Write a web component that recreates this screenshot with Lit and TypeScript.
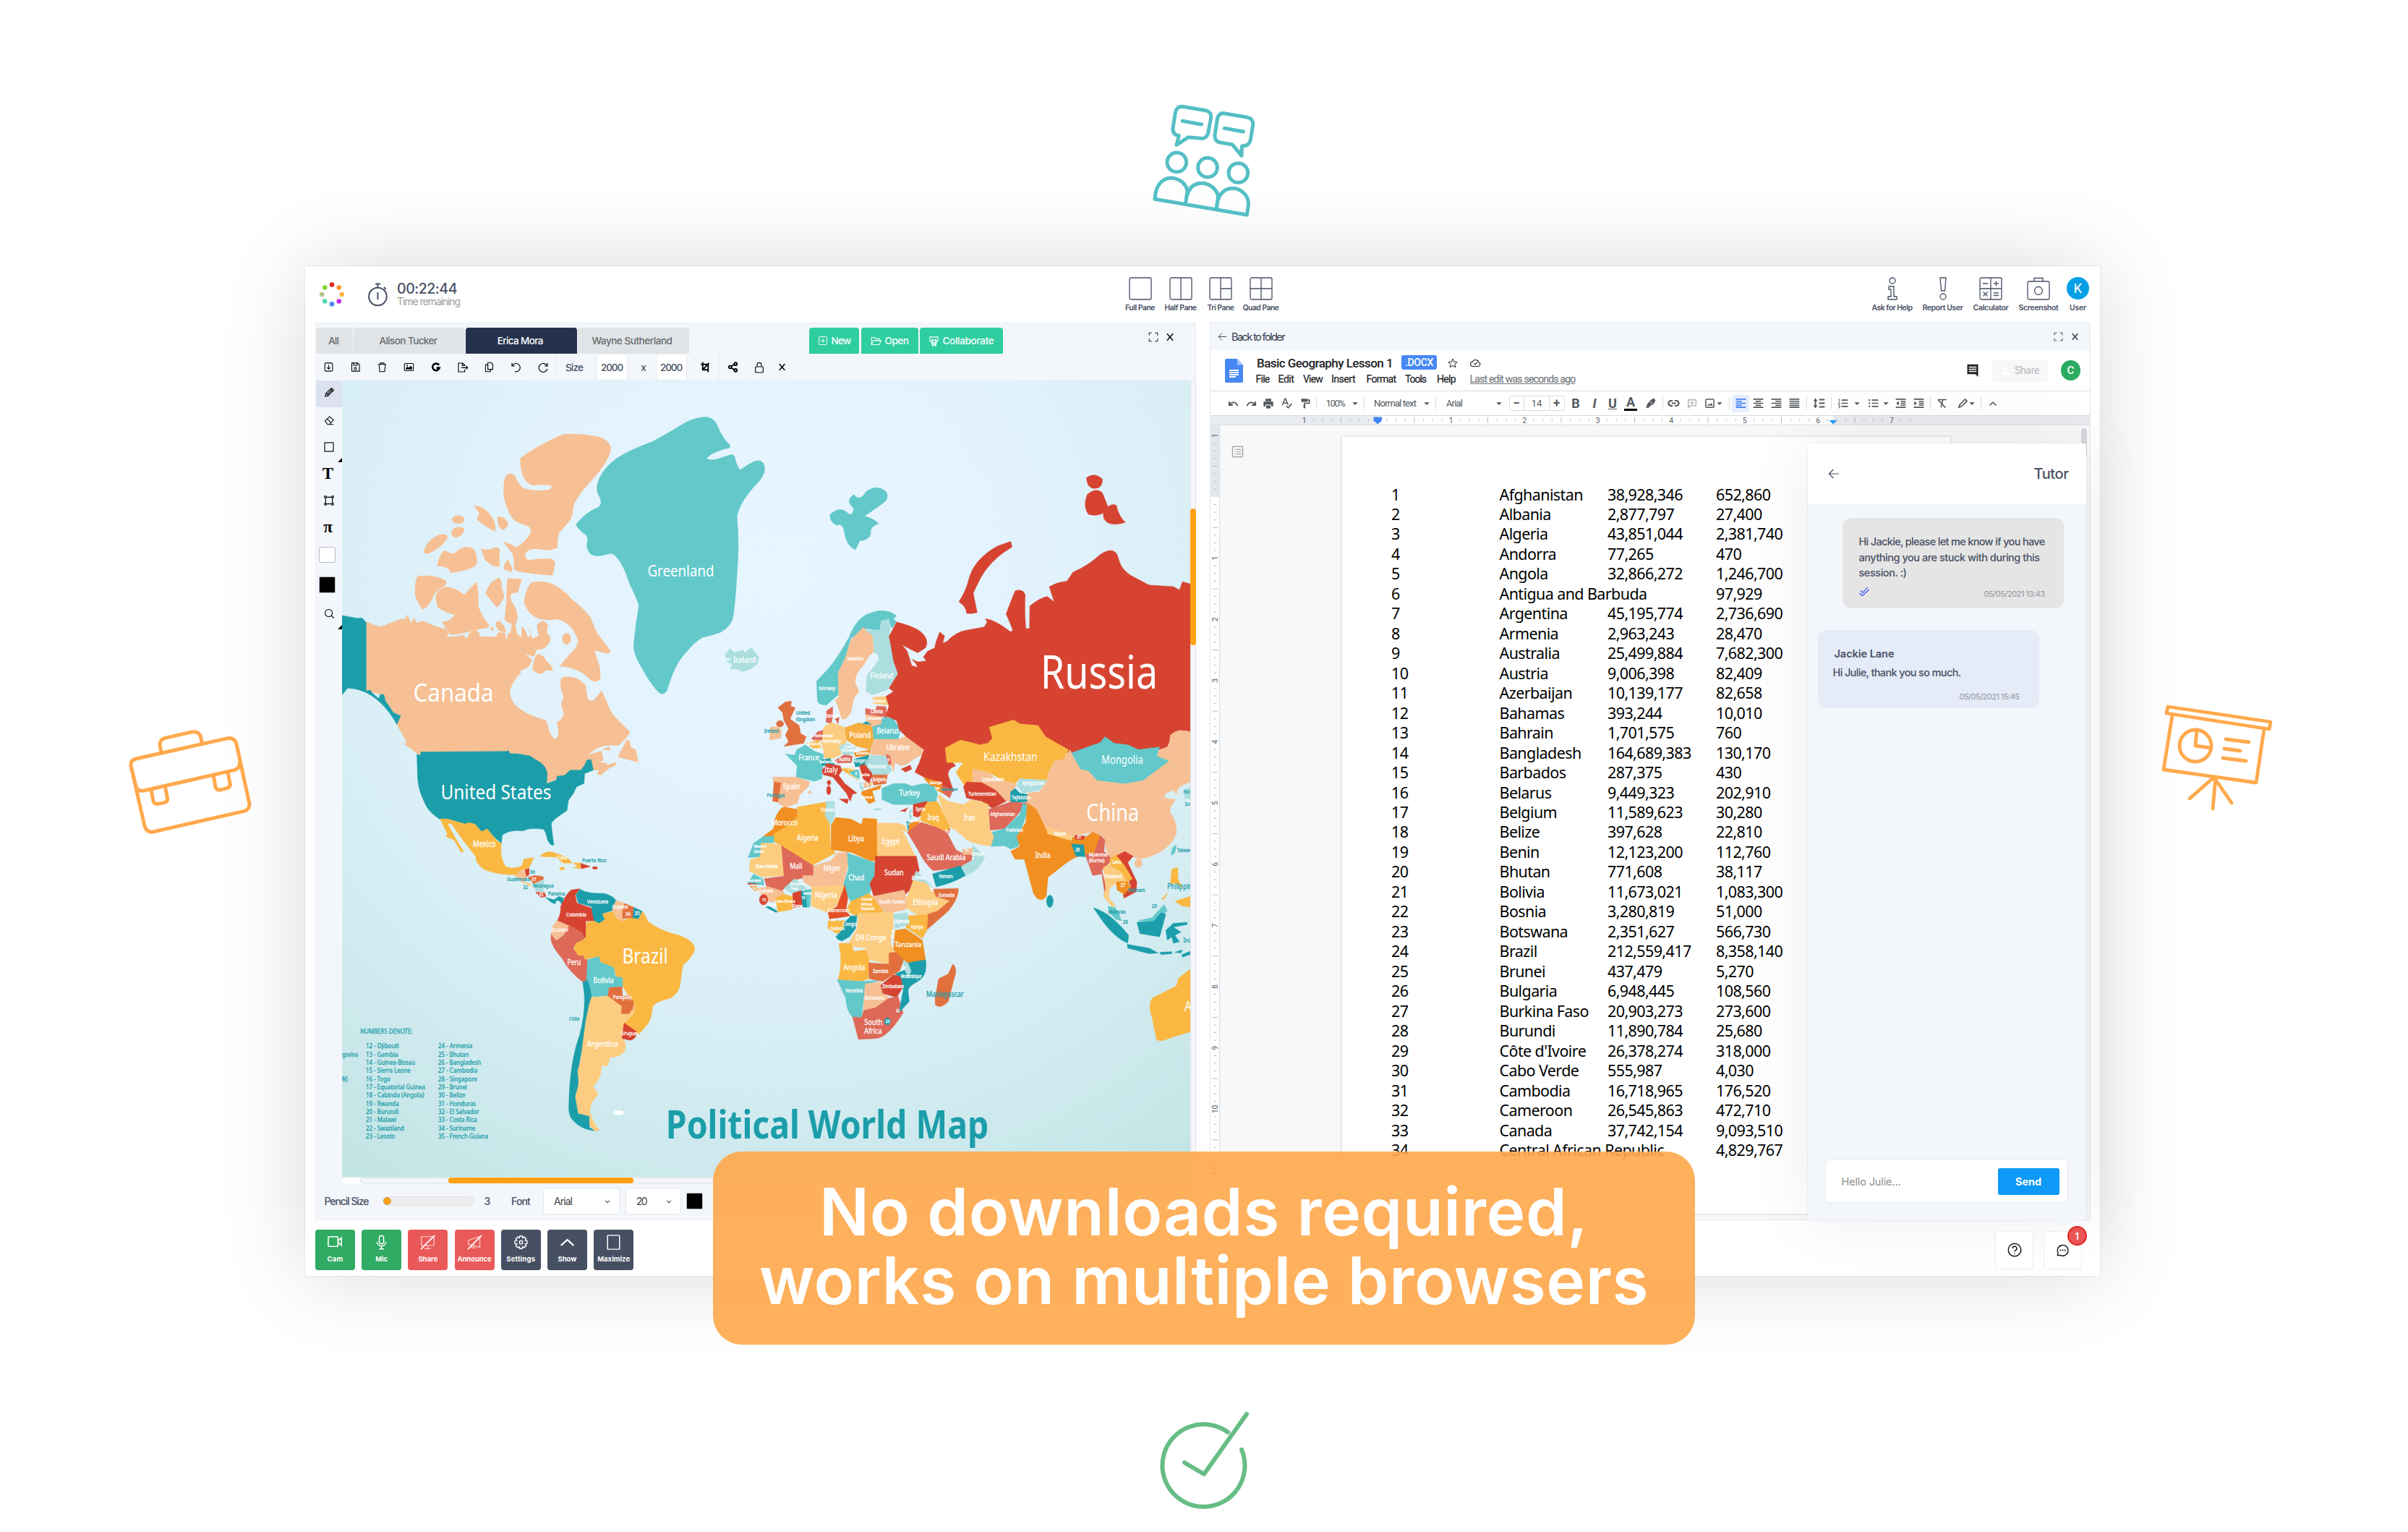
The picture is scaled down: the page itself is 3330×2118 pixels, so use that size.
import { LitElement, html, svg, css, TemplateResult } from "lit";
import { customElement, property } from "lit/decorators.js";

/* Tracks its text so that it fills the given width. */
@customElement("fit-text")
class FitText extends LitElement {
  @property({ type: Number }) w = 0;
  static styles = css`:host{display:inline-block;width:max-content;white-space:nowrap;flex:none}`;
  render() { return html`<slot></slot>`; }
  firstUpdated() {
    const n = (this.textContent || "").length;
    const natural = this.getBoundingClientRect().width;
    if (this.w && n) this.style.letterSpacing = `${(this.w - natural) / n}px`;
  }
}

type Cell = [number, number, unknown, string?];
/* A flex run: each cell has a left edge, a width and its content. */
const run = (start: number, cells: Cell[]) => {
  let at = start;
  return cells.map(([x, w, content, cls]) => {
    const gap = x - at;
    at = x + w;
    return html`<div class="cell ${cls || ""}" style="margin-left:${gap.toFixed(1)}px;width:${w}px">${content}</div>`;
  });
};
const fit = (t: string, w: number, cls = "") => html`<fit-text class=${cls} .w=${w}>${t}</fit-text>`;

const ic = (body: unknown, size = 20, cls = "") =>
  html`<svg class="ic ${cls}" width=${size} height=${size} viewBox="0 0 24 24">${body}</svg>`;

const I = {
  importIn: svg`<rect x="3.5" y="3" width="17" height="18" rx="2.5"/><path d="M12 7v9M8 12.500l4 4 4-4"/>`,
  save: svg`<path d="M4 3h13l4 4v14H4z"/><path d="M8 3v5h8V3"/><circle cx="12" cy="15" r="2.500"/>`,
  trash: svg`<path d="M3 6h18M8 6V3h8v3M5 6l1.500 16h11L19 6"/>`,
  image: svg`<rect x="2" y="4" width="20" height="16" rx="2.500"/><path class="f" d="M5 17v-3l4-3 3 2 4-4 3 3v5z"/><circle cx="8" cy="8.500" r="1"/>`,
  google: svg`<path stroke-width="4.500" d="M19 6.500A8.200 8.200 0 1 0 20 13h-7"/>`,
  exportOut: svg`<path d="M16 9V7l-4-4H3v18h13v-5M11 3v5h5M9 12.500h13M18.500 9l3.500 3.500-3.500 3.500"/>`,
  copy: svg`<path d="M9 2h7l4 4v11H9zM9 7H4v15h11v-5"/>`,
  undo: svg`<path d="M3 3v6h6M3.500 9A8.500 8.500 0 1 1 9 20.500"/>`,
  redo: svg`<path d="M21 3v6h-6M20.500 9A9 9 0 1 0 21 15"/>`,
  crop: svg`<path stroke-width="3" d="M6 1v17h12M2 6h16v17M6 18L20 3"/>`,
  share: svg`<g stroke-width="3"><circle cx="6" cy="12" r="3"/><circle cx="18" cy="5" r="3"/><circle cx="18" cy="19" r="3"/><path d="M9 10l6-4M9 14l6 4"/></g>`,
  lock: svg`<rect x="4" y="10.500" width="16" height="12" rx="1.500"/><path d="M7.500 10V6.500a4.500 4.500 0 0 1 9 0V10"/>`,
  x: svg`<path stroke-width="2.800" d="M5 4l14 16M19 4L5 20"/>`,
  pencil: svg`<path d="M3 21l1.500-7L17 2.500l4.500 4.500L9 19.500zM5 14l4.500 5M8 16L18 6M14.500 5l4.500 4.500"/>`,
  eraser: svg`<path d="M2.500 13L12.500 3l8.500 8-9 9.500H8zM7.500 8.500l8.500 8.500M8 20.500h13"/>`,
  square: svg`<rect x="3" y="3" width="18" height="18"/>`,
  frame: svg`<path d="M6 5h12M6 19h12M5 6v12M19 6v12"/><circle cx="4.500" cy="4.500" r="2"/><circle cx="19.500" cy="4.500" r="2"/><circle cx="4.500" cy="19.500" r="2"/><circle cx="19.500" cy="19.500" r="2"/>`,
  search: svg`<circle cx="10.500" cy="10.500" r="8"/><path d="M16.500 16.500L22 22"/>`,
  plusBox: svg`<rect x="2.500" y="2.500" width="19" height="19" rx="3"/><path d="M12 7v10M7 12h10"/>`,
  folder: svg`<path d="M2 20V4h7l2 3h8v4M2 20l4-9h17l-4 9z"/>`,
  collab: svg`<path d="M3 12V3h18v9M3 11c2 3 4 2 5 3M21 11c-2 3-4 2-5 3"/><g class="f"><circle cx="9" cy="10" r="2.600"/><circle cx="15.500" cy="10" r="2.600"/><path d="M6 14h5.500v9H8zM13 14h5.500L17 23h-4z"/></g>`,
  full: svg`<path d="M8 2H2v6M16 2h6v6M8 22H2v-6M16 22h6v-6"/>`,
  back: svg`<path d="M22 12H2M11 3l-9 9 9 9"/>`,
  chevron: svg`<path stroke-width="2.500" d="M5 9l7 7 7-7"/>`,
  up: svg`<path stroke-width="3" d="M3 17l9-9 9 9"/>`,
  caret: svg`<path class="f" d="M1 7h22l-11 11z"/>`,
  star: svg`<path d="M12 2l3 7 7.500.7-5.700 5L18.500 22 12 18l-6.500 4 1.700-7.300-5.700-5L9 9z"/>`,
  cloud: svg`<path d="M6 20a5 5 0 0 1-.5-10 7 7 0 0 1 13.300 1.200A4.500 4.500 0 0 1 18 20zM8.500 13.500l2.500 2.500 5-5"/>`,
  uArrow: svg`<path stroke-width="3" d="M3 8v8h8M3.500 15.500C9 8 18 8 21.500 18"/>`,
  rArrow: svg`<path stroke-width="3" d="M21 8v8h-8M20.500 15.500C15 8 6 8 2.500 18"/>`,
  print: svg`<g class="f"><path d="M6 2h12v5H6zM2 8h20v10h-4v-4H6v4H2z"/><path d="M7.500 15.500h9V22h-9z"/></g>`,
  spell: svg`<path stroke-width="2.500" d="M2 16L8 2h1l6 14M4.500 11.500h8M11 18l4 4 8-9"/>`,
  paint: svg`<path class="f" d="M4 2h14v7H4z"/><path stroke-width="2.500" d="M18 5h4v7H11v4"/><path class="f" d="M9 15h4v8H9z"/>`,
  marker: svg`<path class="f" d="M13 4l7-3 3 5-5 9-5 1-5 6H2l3-9z"/><path stroke="#fff" stroke-width="1.500" d="M11 8l6 6"/>`,
  link: svg`<path stroke-width="3" d="M10 7H7a5 5 0 0 0 0 10h3M14 7h3a5 5 0 0 1 0 10h-3M8 12h8"/>`,
  addComment: svg`<path stroke-width="2.400" d="M3 3h18v14H8l-5 5zM12 6v8M8 10h8"/>`,
  img2: svg`<rect stroke-width="2.400" x="3" y="3" width="18" height="18" rx="2"/><path class="f" d="M6 17l4-4 2 2 3-4 4 6z"/>`,
  alignL: svg`<path stroke-width="2.600" d="M1 3h22M1 7.500h13M1 12h22M1 16.500h13M1 21h22"/>`,
  alignC: svg`<path stroke-width="2.600" d="M1 3h22M6 7.500h12M1 12h22M6 16.500h12M1 21h22"/>`,
  alignR: svg`<path stroke-width="2.600" d="M1 3h22M10 7.500h13M1 12h22M10 16.500h13M1 21h22"/>`,
  alignJ: svg`<path stroke-width="2.600" d="M1 3h22M1 7.500h22M1 12h22M1 16.500h22M1 21h22"/>`,
  spacing: svg`<path stroke-width="2.600" d="M12 5h11M12 12h11M12 19h11M5 4v16"/><path class="f" d="M1 8l4-6 4 6zM1 16l4 6 4-6z"/>`,
  numbers: svg`<path stroke-width="2.600" d="M9 5h14M9 12h14M9 19h14"/><path stroke-width="1.400" d="M2 3h2v5M2 10h3l-3 4h3M2 16h3v6H2M3 19h2"/>`,
  bullets: svg`<path stroke-width="2.600" d="M9 5h14M9 12h14M9 19h14"/><g class="f"><circle cx="3.500" cy="5" r="1.800"/><circle cx="3.500" cy="12" r="1.800"/><circle cx="3.500" cy="19" r="1.800"/></g>`,
  outdent: svg`<path stroke-width="2.500" d="M1 3h22M12 8h11M12 12h11M12 16h11M1 21h22"/><path class="f" d="M8 7v10l-6-5z"/>`,
  indent: svg`<path stroke-width="2.500" d="M1 3h22M12 8h11M12 12h11M12 16h11M1 21h22"/><path class="f" d="M2 7v10l6-5z"/>`,
  clear: svg`<path stroke-width="2.600" d="M4 4h18M14 4l-4 17M3 4l17 18"/>`,
  pen: svg`<path stroke-width="2.600" d="M3 21l2-6L17 3l4 4L9 19z"/>`,
  comment: svg`<path class="f" d="M2 1h20v23l-5-5H2z"/><path stroke="#fff" stroke-width="1.800" d="M5 6h14M5 10h14M5 14h14"/>`,
  outline: svg`<rect x="2" y="2" width="20" height="20" rx="1.500"/><path d="M9.500 7.500H19M9.500 12H19M9.500 16.500H19M5.500 7.500h2M5.500 12h2M5.500 16.500h2"/>`,
  checks: svg`<path stroke-width="2" d="M3 10l5 5L19 3M1 16l6 6L22 8"/>`,
  help: svg`<circle cx="12" cy="12" r="10.500"/><path d="M8.500 9.500a3.500 3.500 0 1 1 5 3.200c-1 .6-1.500 1-1.500 2.300M12 17.500v1.500"/>`,
  chat: svg`<path d="M3 21l.8-4.500A9.300 9.300 0 1 1 8 20.700z"/><path stroke-width="2.400" stroke-linecap="round" d="M8 12h.1M12 12h.1M16 12h.1"/>`,
  cam: svg`<rect x="2" y="5" width="14" height="14" rx="1"/><path d="M16 11l5-4.500v11L16 13"/>`,
  mic: svg`<rect x="8.500" y="1.500" width="7" height="13" rx="3.500"/><path d="M5 11a7 7 0 0 0 14 0M12 18v4M8 22.500h8"/>`,
  shareOff: svg`<g opacity=".6"><path d="M2 3h20v14H2zM12 17v5M7 22h10"/></g><path stroke-width="2" d="M1 23L23 1"/>`,
  annOff: svg`<g opacity=".6"><path d="M2 9l18-6v17L2 15zM6 16l2 5h4l-1-4"/></g><path stroke-width="2" d="M1 23L23 1"/>`,
  gear: svg`<circle cx="12" cy="12" r="2.600"/><path d="M10 2h4l.6 3 2.600-1.500 2.900 2.900L18.600 9l3 .8v4.200l-3 .8 1.500 2.700-2.900 2.900-2.600-1.500-.6 3.100h-4l-.7-3.100-2.600 1.500-2.900-2.900L5.400 14.800l-3-.8V9.800l3-.8-1.600-2.600 2.900-2.900L9.300 5z"/>`,
  show: svg`<path stroke-width="2.600" d="M2 17l10-9 10 9"/>`,
  max: svg`<rect x="2.500" y="1" width="19" height="22" rx="1"/>`,
};

/* ---------- map ---------- */
const P = "#f6c094", T = "#62c8ca", D = "#1c9eaa", Y = "#fab842", L = "#fccd80", R = "#d64431",
  S = "#de6959", O = "#f18f21", U = "#e2703e", A = "#acdee0";
type Sheet = { x: number; y: number; sx: number; sy: number };
const NA: Sheet = { x: 420, y: 560, sx: 2.24, sy: 2.1778 };
const EA: Sheet = { x: 1000, y: 800, sx: 2.376, sy: 2.24 };
const SA: Sheet = { x: 420, y: 1220, sx: 2.45, sy: 2.8 };
const ARCTIC: Sheet = { x: 0, y: 0, sx: 0.47087, sy: 0.47087 };
const sheet = (s: Sheet, shapes: [string, string][]) => svg`<g transform="translate(${s.x} ${s.y}) scale(${1 / s.sx} ${1 / s.sy})">
  ${shapes.map(([f, d]) => svg`<path fill=${f} stroke=${f} stroke-width=${s.sx * 0.45} stroke-linejoin="round" d=${d}/>`)}</g>`;
const dot = (x: number, y: number, rx: number, ry: number) => `M${x - rx} ${y}a${rx} ${ry} 0 1 0 ${rx * 2} 0a${rx} ${ry} 0 1 0 ${-rx * 2} 0z`;

const north: [string, string][] = [
  [P, "M193 652Q220 665 240 668Q270 655 300 645L314 645 320 632 332 657 342 641 350 657 368 650Q410 670 440 675L450 690 440 698Q470 700 495 693L505 705 512 688 530 677 543 685 545 697Q575 700 598 697L601 686 622 686 629 712 632 690 641 685 645 655 655 660 660 690 674 700 676 668Q690 680 693 700L704 694 697 672 708 705 728 695 722 665Q728 650 745 652L756 662 752 685 764 700Q765 720 740 735L720 737 714 757 685 750 708 768 695 790 670 800 672 808Q650 825 638 860Q637 880 655 905Q690 935 750 950L757 970Q762 995 778 1007Q790 1000 789 980L784 955Q800 950 806 930L797 900 805 880 795 850 797 825Q805 815 830 820Q850 820 873 845L878 880Q885 895 897 890Q912 875 922 860L940 897Q950 930 975 950L1010 985Q1005 1000 975 1025Q930 1022 905 1035L878 1055 922 1042 928 1070 915 1075 935 1078 940 1085 968 1075 965 1085 945 1095 920 1115 908 1112 915 1100 897 1100 890 1080 860 1110 820 1115 780 1128 747 1140 752 1105 735 1082 695 1060 635 1050 362 1048 360 1055 310 1020 320 1017 288 962 300 936 278 927 252 890 248 872 193 862Z"],
  [P, "M973 1060L1000 1010 1010 1012 1012 1030 1028 1038 1036 1075 1012 1070Z M925 1037L945 1030 950 1040Z"],
  [D, "M100 634L119 634 165 642 180 641 193 655 193 862 205 858 212 868 232 884 236 872 248 872 252 890 278 927 300 936 288 962Q250 895 193 866Q160 852 135 853L119 872 100 872Z"],
  [P, "M671 160Q735 115 805 88Q870 85 920 98Q955 110 950 140Q940 170 915 200L860 262Q835 295 833 312Q835 335 818 355L790 385Q785 405 785 430Q770 437 750 437Q730 432 710 433Q685 438 685 455Q688 470 705 467Q730 462 765 463Q780 468 778 480Q775 500 770 513Q710 510 660 500Q648 495 652 480Q650 455 648 450Q625 420 617 410Q640 420 660 428Q690 410 703 385Q705 370 695 365L660 352Q645 345 637 325Q620 290 619 265Q618 235 625 215Q635 200 655 213Q660 235 680 250Q710 262 760 255Q775 245 762 241Q735 238 712 242Q690 238 680 215Q670 195 671 160Z"],
  [P, dot(478, 345, 19, 12) + "M458 385Q458 370 478 368Q498 368 497 375Q490 395 475 398Q458 400 458 385Z M372 440Q385 400 425 390Q445 388 445 400Q430 425 400 440Q375 455 372 440Z M528 303Q560 305 580 335Q597 355 592 380Q560 365 537 345Q540 330 545 325Q535 318 528 303Z M600 337Q625 333 633 360Q625 378 612 374Q598 360 600 337Z M413 485Q420 450 435 438Q440 440 455 446Q468 450 475 440Q500 420 525 433Q540 455 535 480Q520 497 455 505Q450 485 413 485Z M549 433Q575 440 590 430Q607 425 606 440Q605 470 607 485Q590 490 577 478Q560 470 557 455Z M620 495Q620 475 632 466L645 490 645 503Z M345 575Q343 520 355 515Q410 510 440 530Q445 540 430 548Q405 560 402 575Q385 610 368 615Q355 600 345 575Z M408 580Q410 555 440 548Q470 550 497 572Q520 545 535 534Q542 560 540 605Q550 635 575 665Q575 672 540 675Q490 690 455 692Q440 675 428 652Q450 655 468 632Q440 625 415 610Z M563 567Q575 530 605 520Q615 530 612 550Q620 570 620 580Q605 605 598 609Q580 590 563 567Z M628 590Q627 540 632 522L675 525Q665 555 663 565Q640 563 640 575L642 590Q660 610 662 640Q660 655 655 660Q630 660 622 645Z M682 595Q688 550 705 535Q730 530 745 532Q790 540 830 585Q870 615 888 640Q900 670 910 690Q940 725 950 742Q945 752 925 745L903 738Q900 745 912 775Q920 790 918 825Q905 840 885 825Q860 800 835 795Q810 785 793 788Q805 770 835 740Q855 715 848 705Q830 655 785 645Q750 650 725 643Q695 630 682 595Z M708 795Q715 755 725 750Q745 755 750 770Q775 790 770 800Q745 795 737 810Q715 808 708 795Z M595 655L605 650 620 665 627 685 605 680 595 665Z" + dot(814, 704, 13, 17) + dot(583, 674, 4, 5)],
  [T, "M843 360Q870 325 912 308Q925 300 918 280Q905 260 909 240Q920 195 970 160Q1010 135 1080 110Q1120 90 1170 60Q1200 40 1240 36Q1270 35 1280 60Q1300 105 1320 120Q1325 130 1305 132Q1260 145 1248 160Q1255 168 1280 163L1325 149Q1335 150 1337 165Q1345 190 1352 195Q1375 180 1395 170Q1425 160 1428 190Q1430 205 1410 230Q1350 290 1342 335Q1348 400 1345 460Q1340 560 1332 625Q1330 665 1290 685Q1250 697 1235 700Q1200 720 1160 775Q1140 810 1125 860Q1115 875 1102 867Q1080 850 1040 780Q1020 745 1022 720Q1028 660 1038 605Q1035 590 1010 540Q990 480 970 460Q960 445 945 448Q910 460 890 450Q875 435 877 418Q882 400 875 392Q850 375 843 360Z"],
  [A, "M1306 752L1320 733 1335 745 1360 738 1368 745 1385 730 1395 740 1410 760 1405 780 1385 795 1362 803 1340 795 1320 795 1328 780 1308 772 1328 766 1306 760Z"],
  [D, "M350 1052L362 1055 362 1045 630 1043 632 1040 640 1050 660 1050 700 1057 735 1078Q755 1095 754 1115L752 1140 782 1130 785 1118 808 1115 825 1100 858 1100 870 1085 878 1068 890 1068 897 1100 870 1110 868 1140 845 1150 835 1170 820 1190 815 1222Q770 1250 767 1260Q768 1285 775 1325Q765 1330 755 1310Q750 1285 742 1278Q700 1272 680 1283Q640 1278 615 1295L612 1320Q590 1305 568 1277Q560 1287 550 1285Q525 1258 510 1258L500 1262 445 1247 420 1247Q385 1225 375 1200Q350 1150 352 1110Z"],
  [Y, "M422 1247L445 1247 500 1262 510 1258 530 1262 550 1285 568 1277 600 1315 612 1320Q605 1360 625 1390Q650 1400 675 1388L682 1368 712 1363 700 1390 690 1397 672 1402 668 1418 650 1415Q600 1415 560 1400Q530 1380 533 1360Q490 1310 458 1262L445 1260Q460 1290 495 1345L488 1348 465 1310 440 1300 445 1292Z"],
  [P, "M668 1405L687 1400 690 1425 680 1440 655 1420Z"], [L, "M678 1438L700 1440 706 1450Z"],
  [R, "M685 1400L698 1395 698 1415 690 1420Z M718 1467L745 1468 750 1480 735 1483Z M857 1380L888 1390 860 1397Z" + dot(902, 1394, 8, 4)],
  [U, "M695 1422L715 1417 740 1420 744 1427 712 1443Z"], [A, "M710 1443L744 1430 742 1467 718 1463Z"],
  [D, "M748 1483L775 1490 790 1480 805 1485 800 1505Q785 1480 778 1503L765 1497Z"],
  [Y, "M735 1355Q755 1340 775 1348L815 1362 832 1380 805 1380 780 1362 735 1360Z M835 1378L857 1380 857 1397 835 1393 848 1390Z" + dot(800, 1396, 8, 4)],
];
const south: [string, string][] = [
  [R, "M935 25L920 50 925 80 975 100 985 150 955 150 958 215 945 215 900 170 858 150Q872 125 870 95Q885 50 905 30Z"],
  [D, "M935 27Q960 45 1015 43Q1045 50 1058 70L1045 110 1012 122 1020 145 1000 160 985 155 978 120 975 95 930 80 922 50Z"],
  [P, "M1058 70L1087 82 1085 150 1068 150 1055 125 1045 105Z"], [U, "M1087 82L1118 97 1118 140 1080 140 1080 115Z"], [D, "M1118 97L1147 112 1133 143 1115 140Z"],
  [Y, "M958 155L985 150 1000 160 1020 145 1012 122 1048 113 1060 140 1080 152 1100 138 1135 142 1147 112Q1160 130 1165 150Q1200 185 1270 205Q1330 230 1324 265Q1310 300 1285 320Q1280 350 1275 400Q1265 445 1225 455Q1190 465 1183 480Q1178 530 1165 550L1135 590 1085 545 1105 515 1120 490 1115 465 1078 400 1080 370 1058 365 1052 335 1005 310 1000 287 950 300 915 280 918 230 955 218Z"],
  [S, "M838 200L855 225 880 205 898 165 945 198 950 220 922 235 913 258 930 285 948 285 950 298 962 300 960 350 965 365 950 390Q900 350 875 295Q840 250 837 220Z"],
  [P, "M858 148L898 168 880 205 855 225 838 200 840 175Z"],
  [T, "M962 300L1000 287 1005 310 1050 330 1056 365 1080 370 1080 405 1035 408 1030 440 985 445 972 440 958 370Z"],
  [D, "M945 388L960 378 970 410 975 445 968 470 955 540 960 560 935 690 930 780 925 830 935 895 970 905 968 950 990 963Q940 960 910 920Q895 900 898 860Q900 700 935 590Q955 500 950 430Z"],
  [L, "M985 445L1030 440 1078 480 1075 508 1120 485 1120 508 1085 548 1078 590 1088 620Q1100 660 1060 675L1037 680 1030 710 1008 712Q1010 760 980 790L998 822Q965 860 970 890Q980 935 1003 960L985 963 968 940 968 905 930 895 920 830 932 780 928 730 938 690 948 600 955 540 968 470 975 445Z"],
  [U, "M1035 408L1078 405 1080 440 1105 440 1118 465 1115 490 1100 510 1075 508 1078 480 1030 440Z"],
  [R, "M1085 545L1130 580Q1125 610 1105 612L1078 605Z"],
  ["#fff", dot(1067, 892, 18, 8)],
];
const east: [string, string][] = [
  [T, "M310 380L307 318 350 275Q380 240 415 180Q435 130 470 112Q530 85 570 115L560 125 570 133 555 155 545 130 520 130 515 160 465 155 420 185 395 265 380 290 378 360 340 392Q315 392 310 380Z"],
  [P, "M460 152L490 170 497 225 480 240 460 270Q430 300 435 325L447 350 430 370 420 415Q405 440 390 435Q380 400 368 375L380 370 378 290 400 250 420 190 440 170Z"],
  [A, "M465 160L515 160 520 130 545 125 550 150 545 185 555 220 560 255 575 295 540 345 490 360 470 350 472 300Q500 270 512 250Q512 235 497 230L492 175Z"],
  [U, "M180 400L205 382 225 380 222 395 237 400 220 435 250 455 255 480 273 490 265 510 200 520 215 505 205 485 215 465 200 440 195 415Z" + dot(187, 450, 12, 10)],
  [P, "M155 460L180 458 192 470 188 495 153 500Z"],
  [T, "M205 543L235 547 242 530 270 515 300 535 330 545 325 620 300 628 240 615 243 580Z"],
  [P, "M163 615L240 615 285 630 280 645 252 670 245 695 205 710 180 695 180 635 165 630Z" + dot(285, 662, 6, 4)],
  [U, "M167 630L190 633 180 692 163 690Z"],
  [L, "M330 460L355 445 398 460 405 510 380 520 390 545 350 560 332 555 330 530 320 500Z"],
  [S, "M338 445L340 410 360 397 360 430 355 448Z M368 435L382 428 378 450Z M290 497L310 475 328 470 325 500 300 500Z M365 565L400 545 425 550 422 570 375 572Z"],
  [Y, "M275 510L315 500 322 525 295 525Z M385 590L425 585 440 595 410 600 445 625Z"],
  ["#f5ae3f", "M400 462L445 447 490 455 498 490 485 530 440 520 405 500Z"],
  [T, "M490 450L535 428 560 435 583 470 575 500 495 497Z M415 600L445 590 450 622 430 612Z"],
  [P, "M495 498L575 498 600 488 655 520 655 545 625 560 605 575 585 580 565 570 560 600 545 550 485 545Z M468 422L520 422 520 450 490 458 470 440Z M462 632L490 628 485 645 462 648Z"],
  [A, "M485 548L535 550 555 595 540 608 490 608 465 580Z M380 520L405 510 435 522 425 545 395 545Z M450 630L462 640 460 660 450 650Z"],
  [S, "M535 545L548 550 553 575 545 578Z M468 402L500 408 505 395 535 397 540 430 468 420Z"],
  [U, "M485 608L540 608 535 635 495 640Z"],
  [O, "M455 660L520 640 515 652 490 658 500 690 480 698 455 668Z M430 540L485 530 480 548 435 552Z"],
  [D, "M325 562L350 557 368 575 325 580Z M428 560L480 547 470 575 435 585Z M458 450L470 443 487 452Z"],
  [R, "M325 595L340 573 385 580 390 595 380 610 400 635 440 665 425 668 418 690 405 665 360 615 330 608Z M382 683L412 683 408 698Z M448 580L465 575 490 605 480 635 460 620Z M582 720L608 710 600 722Z" + dot(347, 656, 7, 14) + dot(348, 632, 6, 7)],
  [L, "M492 368L540 365 540 392 495 387Z"],
  [A, dot(508, 715, 14, 3)],
  [R, "M545 180L570 135Q620 145 650 165Q680 190 665 215L640 230Q605 215 588 205L605 225 612 245 620 270 640 275 632 262 620 250 640 258 668 255 658 243 672 225 695 215 700 195 712 165 728 178 722 200 735 195Q765 165 800 160L858 150 868 135 862 125Q890 125 945 165L952 160Q945 140 930 110Q950 60 960 38Q985 30 993 50Q990 100 995 155L1007 155 1008 85Q1040 60 1065 55L1088 72 1072 25Q1100 10 1130 8L1150 -20Q1200 -40 1240 -75Q1290 -105 1300 -60Q1310 -20 1360 0L1400 20 1480 25 1500 35 1510 10 1550 20 1550 475 1500 470Q1475 475 1470 500L1455 530 1430 530 1400 525 1360 540 1340 525 1280 520 1255 500 1240 515 1150 540 1125 540 1060 500 1035 465 1000 470 975 455 955 448 885 470 895 505 870 520 845 525 780 510 740 530 755 570 765 580Q735 590 740 610L758 660 735 650 700 635 660 615 630 600 645 570 660 530 600 488 580 470 570 440 535 425 545 395 535 365 560 350 545 340 575 295 560 255 550 200Z M585 590L615 578 620 590 600 600Z"],
  [R, "M835 105Q820 110 800 108Q800 88 775 72Q800 35 808 0Q825 -60 900 -100L945 -115 950 -98Q880 -60 845 0L822 45Z"],
  [Y, "M730 525L780 500 845 515 870 510 885 495 875 460 955 438 975 450 1035 455 1060 490 1135 530 1120 560 1090 565 1070 600 1065 625 975 620 945 650 900 615 870 600 820 590 820 635 792 640 765 600 790 570 735 570Z"],
  [P, "M820 590L870 600 900 625 945 630 965 640 945 665 945 690 930 690 895 655 820 635Z"],
  [R, "M790 645L800 630 850 632 895 655 930 690 885 712 850 690 800 680Z"],
  [A, "M975 620L1065 625 1040 655 985 665 965 640Z"], [D, "M945 660L960 650 975 665 1010 670 1015 690 945 695Z"],
  [S, "M872 715L945 692 1000 695 965 735 925 775 878 780Z M720 640L755 655 745 680 715 660Z"],
  [T, "M880 830L885 785 925 775 975 730 985 695 1005 705 990 750 975 790 970 830 945 838 925 828Z"],
  [T, "M522 650L560 635 600 635 620 643 660 635 690 640 705 665 700 690 630 700 560 700 522 685Z"],
  [O, "M658 617L715 630 720 650 680 640Z M697 642L718 645 722 665 700 655Z"],
  [L, "M705 668L740 690 790 700 815 685 845 690 872 700 875 775 890 800 880 828Q850 830 800 810Q770 780 745 770L720 715Z"],
  [R, "M625 700L670 690 675 715 640 740 625 735Z M730 770L745 775 742 788 732 786Z"], [D, "M603 752L615 755 608 782Z"], [O, "M612 760L650 745 630 780 610 785Z"],
  [Y, "M672 692L705 690 720 720 745 770 735 785 700 770 650 750 650 725Z"],
  [S, "M605 785L650 755 700 770 735 785 765 840 785 850 820 850 815 880 780 895 690 905Q660 880 640 840Z"],
  [D, "M688 915L780 890 797 920Q750 945 700 955Z"], [A, "M785 890L825 870 820 825 860 860Q850 900 797 920Z M612 720L622 712 620 750 612 745Z"], [P, "M785 840L820 835 818 855 790 855Z"],
  [P, "M1065 610L1090 565 1120 560 1140 530 1175 590 1200 595 1230 625 1320 635 1380 625 1465 565 1425 550 1435 530 1465 520 1470 485Q1500 460 1550 480L1550 625 1510 640Q1490 650 1490 670L1482 655 1455 665 1450 680 1488 685Q1465 710 1470 725Q1495 760 1490 790Q1470 840 1400 862L1370 870 1355 865 1320 848 1290 865 1265 862 1250 800 1215 785 1145 800 1060 780 1030 720 1000 700 1000 665 1040 660 1070 620Z" + dot(1365, 882, 12, 13)],
  [T, "M1145 540L1240 508 1255 490 1285 510 1330 515 1365 530 1435 522 1425 550 1465 565 1430 590 1380 625 1320 635 1230 625 1200 595 1175 590Z"],
  [O, "M1000 695L1030 715 1060 775 1070 790 1145 812 1150 800 1185 805 1215 785 1245 800 1220 850 1190 855 1155 865 1130 880 1068 925 1062 985Q1040 1010 1020 975L990 870 960 870 945 845 975 830 965 800 995 755Z"],
  [L, "M1065 770L1145 795 1145 812 1065 790Z"], [R, "M1157 795L1190 798 1185 808 1157 808Z"], [D, "M1145 822L1185 825 1190 862 1160 860Z" + dot(1074, 1000, 11, 19)],
  [S, "M1190 855L1220 850 1240 795 1255 810 1252 845 1280 870 1245 905 1260 960 1255 980 1245 915 1215 920Z"],
  [L, "M1250 895L1280 880 1300 885 1345 935 1290 945 1270 960 1268 990 1290 1015 1280 1018 1250 985 1258 960Z"],
  [R, "M1290 860L1320 845 1348 860 1330 880 1360 940 1358 970 1318 990 1315 980 1340 955 1320 895Z"],
  [Y, "M1270 870L1290 855 1320 890 1345 930 1330 940 1310 910 1275 890Z"],
  [O, "M1292 940L1330 938 1338 958 1318 978 1295 965Z"],
  [T, "M1265 1015L1290 1020 1310 1060 1290 1055 1270 1035Z M1365 1060L1410 1050 1450 1010 1460 1030 1415 1065Z M1473 858Q1472 830 1490 825L1485 850Z"],
  [D, "M1360 1065L1415 1062 1440 1035 1455 1040 1435 1110 1370 1100Z M1217 1020Q1260 1030 1310 1080L1333 1105 1330 1130Q1290 1115 1250 1065Z M1328 1133L1400 1145 1430 1160 1400 1162 1330 1145Z M1435 1158L1475 1156 1475 1162 1440 1165Z M1485 1158L1510 1150 1505 1160Z M1455 1090L1480 1068 1525 1065 1525 1072 1480 1080 1505 1095 1485 1105 1500 1125 1480 1130 1475 1110 1460 1120Z M1508 1165L1535 1155 1535 1165 1510 1173Z"],
  [Y, "M1470 945L1475 900 1495 895 1495 930 1510 960 1490 945Z M1485 1000L1550 980 1550 1018 1510 1015Z M1442 993L1462 972 1450 993Z"],
  [A, "M1515 655L1550 640 1550 685 1518 680Z"],
  [Y, "M1550 1200L1497 1238 1490 1262 1410 1300Q1395 1325 1410 1360L1425 1430 1445 1432 1480 1420 1550 1400Z"],
  [O, "M130 800L165 775 170 745Q185 710 200 708L245 715 243 740 205 770 170 798Z"],
  [T, "M82 865L100 820 130 800 168 798 168 818 125 820 122 862Z"],
  [Y, "M168 790L205 770 245 740 243 708 340 692 350 760 353 830 370 850 290 890 168 815Z"],
  [A, "M340 690L365 690 368 730 355 765 335 735Z"],
  [O, "M355 765L370 740 420 745 455 762 460 742 505 745 507 875 485 875 420 848 355 840Z"],
  [L, "M507 757L575 758 598 765 605 785 590 780 632 860 507 860Z"],
  [L, "M90 870L122 862 125 820 165 820 192 830 200 920 130 925 85 905Z"],
  [S, "M192 828L297 890 297 920 230 935 190 970 145 960 135 930 200 922Z"],
  [P, "M262 920L297 920 297 890 353 875 375 850 410 848 410 890 395 950 290 955 265 940Z"],
  [T, "M408 850L498 880 498 930 480 980 420 1000 400 970 395 950 412 900Z"],
  [R, "M500 860L635 860 645 905 625 930 620 960 590 985 495 985 482 945 498 920Z"],
  [A, "M622 935L635 905 690 958 660 940Z"],
  [L, "M600 1000L625 935 665 942 690 970 745 1000 700 1035 640 1042 600 1020Z M290 955L395 950 405 970 370 1015 345 1035 290 1015Z"],
  [U, "M690 962L773 960Q775 990 740 1030L670 1088 672 1040 705 1030 745 998 700 985Z"],
  [P, "M490 985L595 965 605 1000 600 1025 540 1038 495 1005Z"],
  [Y, "M403 1030L420 1000 480 975 530 1035 440 1045Z M345 1060L400 1060 400 1085 375 1100 345 1085Z"],
  ["#e44f26", "M345 1035L375 1015 400 950 410 990 403 1030 418 1045 350 1055Z"],
  [D, "M370 1110L395 1085 400 1065 420 1045 440 1045 435 1085 415 1110 385 1125Z"],
  [L, "M445 1035L560 1035 560 1075 550 1130 565 1160 545 1195 500 1185 475 1180 470 1145 420 1140 415 1125 440 1085Z"],
  [Y, "M380 1130L420 1130 430 1155 470 1150 480 1185 478 1240 450 1248 378 1243Q395 1190 380 1130Z"],
  [T, "M375 1243L450 1248 515 1245 467 1258 455 1360 425 1358Q405 1340 403 1300Z"],
  [U, "M478 1190L545 1195 545 1160 585 1155 595 1180 580 1215 525 1248 480 1240Z"],
  [P, "M467 1255L518 1250 530 1285 545 1300 500 1330 460 1340Z"],
  [R, "M518 1260L560 1228 588 1232 592 1265 570 1298 525 1285Z"],
  [S, "M425 1358L455 1360 462 1338 500 1330 545 1300 575 1295 592 1345Q540 1425 500 1425L445 1428Z"],
  [D, "M605 1188L665 1178Q675 1230 640 1248Q605 1265 608 1280L612 1310 578 1345 592 1275 585 1235 565 1225 605 1210Z" + dot(540, 1372, 10, 11)],
  [A, "M592 1170L603 1180 618 1215 610 1235 595 1210Z"],
  [O, "M565 1090L600 1085 655 1120 665 1180 605 1190 560 1150Z"],
  [Y, "M605 1045L672 1040 670 1090 655 1115 600 1080Z"], [A, "M560 1040L605 1035 612 1070 565 1085Z"],
  [T, "M80 945L100 915 130 930 135 950Z"], [P, "M105 960L150 955 200 970 190 1005 150 1000Z"], [O, "M88 953L110 953 105 968Z"],
  [R, dot(133, 995, 14, 16) + "M228 968L258 966 260 1015 230 1020Z M82 944L115 946 82 948Z"],
  [D, "M145 1012L178 1030 175 1035 140 1018Z M256 970L275 965 280 1018 262 1018Z"],
  [Y, "M172 990L200 978 228 985 228 1025 180 1033Z"], [A, "M200 960L235 930 275 960 225 975Z"], [T, "M272 965L290 962 285 1018 276 1018Z"],
  [U, "M697 1300L708 1240 740 1225 755 1195Q765 1200 765 1220L740 1310Q715 1335 697 1320Z"],
];
const arctic: [string, string][] = [
  [T, "M540.500 335Q547 329 552 334Q555 337 556 331Q550 326 556 322Q560 327 564 320Q571 315 577 320Q580 325 573 329Q566 334 563 336Q570 338 572 341Q566 343 567 348Q565 352 560 352L557 358Q551 355 550 347Q549 340 545 342Q540 340 540.500 335Z"],
  [R, "M707.500 311Q713 307 718 312Q718 318 713 318Q708 318 707.500 311Z M708 322Q714 317 718 321L722 331Q717 337 709 335Q705 330 708 322Z M719 332Q724 327 727 329Q729 337 733 340Q728 342 723 341Q717 339 719 332Z"],
];

type Label = [string, number, number, number, number, string?];
/* label: text, left, right, baseline (sheet units), font size (px), colour */
const labels = (s: Sheet, list: Label[]) => list.map(([t, a, b, y, size, c]) => svg`<text x=${s.x + a / s.sx} y=${s.y + y / s.sy}
  font-size=${size} fill=${c || "#fff"} stroke=${c || "#fff"} stroke-width=${size < 13 ? 0.3 : 0} textLength=${(b - a) / s.sx} lengthAdjust="spacingAndGlyphs">${t}</text>`);
const naL: Label[] = [["Greenland", 1065, 1271, 517, 22], ["Iceland", 1331, 1401, 775, 11], ["Canada", 339, 588, 893, 34], ["United States", 424, 767, 1187, 28],
  ["Mexico", 524, 594, 1332, 12], ["Cuba", 783, 816, 1368, 8], ["Puerto Rico", 862, 937, 1376, 8, D], ["30", 700, 716, 1411, 8, D], ["31", 706, 721, 1433, 8],
  ["Guatemala", 629, 700, 1434, 8, D], ["32", 679, 694, 1457, 8, D], ["Nicaragua", 709, 774, 1454, 8, D], ["33", 728, 742, 1480, 8], ["Panama", 757, 809, 1478, 8, D]];
const saL: Label[] = [["Venezuela", 960, 1032, 81, 8], ["Colombia", 889, 957, 132, 8], ["Guyana", 1045, 1098, 103, 7.500], ["34", 1090, 1107, 129, 8], ["35", 1121, 1138, 126, 8],
  ["Ecuador", 839, 897, 190, 7.500], ["Brazil", 1079, 1234, 316, 30], ["Peru", 893, 939, 321, 11], ["Bolivia", 981, 1050, 389, 11], ["Paraguay", 1048, 1112, 453, 7.500],
  ["Chile", 899, 934, 535, 8, D], ["Uruguay", 1076, 1134, 592, 7.500], ["Argentina", 960, 1064, 637, 11]];
const eaL: Label[] = [["Russia", 1043, 1429, 340, 64], ["China", 1194, 1367, 752, 32], ["Kazakhstan", 856, 1033, 564, 17], ["Mongolia", 1243, 1381, 573, 17],
  ["Sweden", 408, 461, 254, 7.500], ["Finland", 484, 559, 309, 11], ["Norway", 315, 368, 345, 7.500], ["United", 240, 286, 422, 7.500, D], ["Kingdom", 240, 302, 442, 7.500, D], ["Ireland", 135, 183, 477, 7.500, D],
  ["Denmark", 337, 385, 430, 6.500], ["Estonia", 495, 533, 383, 6], ["Latvia", 485, 525, 418, 7], ["Lithuania", 470, 519, 438, 6], ["Poland", 415, 485, 494, 11], ["Belarus", 505, 578, 479, 10],
  ["Netherlands", 300, 362, 491, 6], ["Germany", 325, 388, 510, 8], ["Belgium", 278, 322, 516, 6], ["Czech", 397, 430, 524, 6], ["Republic", 390, 435, 537, 6], ["Ukraine", 536, 614, 532, 10.500], ["France", 248, 316, 562, 11],
  ["Slovakia", 437, 480, 544, 6], ["Austria", 381, 418, 564, 6.500], ["Hungary", 427, 472, 570, 6.500], ["Switzerland", 316, 375, 572, 6], ["Slovenia", 390, 432, 581, 6], ["Croatia", 409, 446, 591, 6], ["Romania", 477, 536, 588, 8], ["Italy", 333, 376, 601, 11],
  ["Serbia", 450, 482, 612, 6], ["Bulgaria", 492, 535, 627, 6.500], ["Greece", 455, 491, 682, 6], ["Spain", 197, 253, 652, 11], ["Portugal", 144, 202, 676, 8, D], ["Turkey", 579, 647, 672, 11], ["Georgia", 679, 720, 637, 6], ["24", 697, 711, 654, 6], ["Azerbaijan", 715, 771, 656, 6, D],
  ["Uzbekistan", 850, 924, 627, 8], ["Kyrgyzstan", 984, 1056, 639, 8], ["Turkmenistan", 806, 898, 673, 8], ["Tajikistan", 948, 1012, 683, 8], ["Afghanistan", 878, 960, 736, 8], ["Pakistan", 930, 986, 784, 8],
  ["Syria", 632, 664, 720, 7], ["Jordan", 614, 650, 754, 6], ["Iraq", 672, 710, 748, 11], ["Iran", 791, 829, 749, 11], ["Tunisia", 321, 367, 723, 7], ["Morocco", 159, 245, 764, 10], ["Algeria", 242, 313, 811, 11], ["Libya", 411, 463, 813, 11], ["Egypt", 521, 580, 823, 11],
  ["Western", 101, 143, 835, 6], ["Sahara", 101, 135, 850, 6], ["Mauritania", 107, 180, 896, 7.500], ["Mali", 219, 260, 900, 11], ["Niger", 330, 386, 906, 11], ["Chad", 412, 464, 934, 11], ["Sudan", 530, 593, 919, 11], ["Saudi Arabia", 670, 797, 873, 10.500], ["Oman", 816, 858, 859, 7.500], ["11", 796, 807, 847, 6], ["Yemen", 709, 755, 929, 7.500], ["10", 729, 742, 786, 6],
  ["Eritrea", 620, 663, 933, 7.500], ["Senegal", 83, 125, 939, 6], ["14", 95, 107, 964, 6], ["Guinea", 115, 164, 973, 7.500], ["Burkina", 221, 262, 950, 6], ["Faso", 223, 246, 964, 6], ["Nigeria", 302, 374, 988, 11], ["15", 128, 141, 999, 6], ["Benin", 263, 292, 979, 6], ["16", 258, 270, 992, 6], ["Cote d'Ivoire", 171, 237, 1004, 6], ["Liberia", 140, 174, 1016, 6], ["Ghana", 226, 260, 1018, 6],
  ["Central", 454, 490, 998, 6], ["African", 454, 491, 1013, 6], ["Republic", 454, 499, 1027, 6], ["South Sudan", 512, 598, 1007, 7.500], ["Ethiopia", 624, 706, 1011, 10.500], ["Somalia", 708, 761, 987, 7.500], ["12", 679, 692, 969, 6], ["Cameroon", 344, 416, 1033, 7.500], ["Uganda", 560, 613, 1068, 7.500], ["Kenya", 618, 658, 1084, 7.500], ["17", 354, 368, 1063, 6], ["Congo", 393, 439, 1077, 7.500], ["Gabon", 352, 399, 1089, 7.500], ["DR Congo", 435, 536, 1121, 10.500], ["18", 375, 387, 1129, 6], ["19", 553, 565, 1098, 6], ["20", 550, 563, 1111, 6],
  ["Tanzania", 564, 652, 1140, 9.500], ["Angola", 395, 467, 1212, 11], ["Zambia", 492, 543, 1222, 7.500], ["21", 590, 602, 1210, 6], ["Mozambique", 584, 652, 1237, 6.500], ["Zimbabwe", 523, 594, 1269, 7.500], ["Namibia", 402, 459, 1282, 7.500], ["Botswana", 466, 530, 1305, 7.500], ["22", 568, 580, 1343, 6], ["South", 464, 524, 1382, 11], ["23", 534, 547, 1377, 6], ["Africa", 464, 522, 1410, 11], ["Madagascar", 668, 791, 1296, 11, D],
  ["India", 1026, 1076, 866, 11], ["Nepal", 1088, 1127, 796, 7.500], ["25", 1163, 1176, 804, 6], ["26", 1158, 1172, 845, 7], ["Myanmar", 1202, 1266, 860, 7.500], ["(Burma)", 1202, 1254, 879, 7.500], ["Laos", 1278, 1308, 883, 7], ["Thailand", 1252, 1311, 929, 7.500], ["27", 1306, 1322, 955, 7.500], ["Vietnam", 1330, 1387, 971, 7.500, D],
  ["Malaysia", 1266, 1323, 1037, 7.500, D], ["28", 1314, 1330, 1069, 7.500, D], ["29", 1409, 1426, 1019, 7.500, D], ["Philippines", 1460, 1563, 962, 11, D], ["Taiwan", 1492, 1540, 847, 8, D], ["North", 1513, 1550, 665, 7.500, D], ["South", 1518, 1555, 705, 7.500, D], ["Indonesia", 1513, 1590, 1128, 9, D], ["Australia", 1516, 1670, 1340, 20],
  ["1", 314, 320, 530, 6], ["2", 433, 440, 607, 6], ["3", 447, 454, 625, 6], ["4", 455, 461, 645, 6], ["5", 471, 478, 642, 6], ["6", 541, 547, 564, 6], ["7", 602, 608, 724, 6], ["8", 617, 623, 734, 6], ["9", 606, 611, 765, 6]];
const legend = [["12 - Djibouti", 322, "24 - Armenia", 571], ["13 - Gambia", 319, "25 - Bhutan", 559], ["14 - Guinea-Bissau", 377, "26 - Bangladesh", 600], ["15 - Sierra Leone", 361, "27 - Cambodia", 588], ["16 - Togo", 293, "28 - Singapore", 587], ["17 - Equatorial Guinea", 411, "29 - Brunei", 553], ["18 - Cabinda (Angola)", 407, "30 - Belize", 547], ["19 - Rwanda", 322, "31 - Honduras", 583], ["20 - Burundi", 321, "32 - El Salvador", 594], ["21 - Malawi", 313, "33 - Costa Rica", 587], ["22 - Swaziland", 340, "34 - Suriname", 581], ["23 - Lesoto", 309, "35 - French Guiana", 625]] as [string, number, string, number][];
const legendL: Label[] = [["NUMBERS DENOTE:", 191, 368, 586, 9.500, D], ["Herzegovina", 85, 183, 676, 9, D], ["(FYROM)", 90, 148, 771, 9, D],
  ...legend.flatMap(([a, ax, b, bx], i): Label[] => [[a, 210, ax, 643.500 + i * 31.750, 9, D], [b, 455, bx, 643.500 + i * 31.750, 9, D]]),
  ["Political World Map", 1227, 2321, 993, 53, D]];

const worldMap = svg`<svg class="map" width="1173" height="1102" viewBox="473 526 1173 1102">
  <defs><radialGradient id="sea" gradientUnits="userSpaceOnUse" cx="1067" cy="790" r="1100">
    <stop offset="0" stop-color="#e7f5ff"/><stop offset=".3" stop-color="#e3f3fd"/><stop offset=".58" stop-color="#d8eef5"/><stop offset=".95" stop-color="#c0e3e3"/></radialGradient></defs>
  <rect x="473" y="526" width="1173" height="1102" fill="url(#sea)"/>
  ${sheet(NA, north)}${sheet(SA, south)}${sheet(EA, east)}${sheet(ARCTIC, arctic)}
  <g class="lb">${labels(NA, naL)}${labels(SA, saL)}${labels(EA, eaL)}${labels(SA, legendL.slice(0, -1))}</g>
  <g class="ttl">${labels(SA, legendL.slice(-1))}</g></svg>`;

/* ---------- document ---------- */
const rows = `Afghanistan|38,928,346|652,860
Albania|2,877,797|27,400
Algeria|43,851,044|2,381,740
Andorra|77,265|470
Angola|32,866,272|1,246,700
Antigua and Barbuda||97,929
Argentina|45,195,774|2,736,690
Armenia|2,963,243|28,470
Australia|25,499,884|7,682,300
Austria|9,006,398|82,409
Azerbaijan|10,139,177|82,658
Bahamas|393,244|10,010
Bahrain|1,701,575|760
Bangladesh|164,689,383|130,170
Barbados|287,375|430
Belarus|9,449,323|202,910
Belgium|11,589,623|30,280
Belize|397,628|22,810
Benin|12,123,200|112,760
Bhutan|771,608|38,117
Bolivia|11,673,021|1,083,300
Bosnia|3,280,819|51,000
Botswana|2,351,627|566,730
Brazil|212,559,417|8,358,140
Brunei|437,479|5,270
Bulgaria|6,948,445|108,560
Burkina Faso|20,903,273|273,600
Burundi|11,890,784|25,680
Côte d'Ivoire|26,378,274|318,000
Cabo Verde|555,987|4,030
Cambodia|16,718,965|176,520
Cameroon|26,545,863|472,710
Canada|37,742,154|9,093,510
Central African Republic||4,829,767`.split("\n").map((r) => r.split("|"));

const hRuler = () => {
  const out: TemplateResult[] = [];
  for (let i = -8; i <= 58; i++) {
    const x = 231.200 + i * 12.690;
    if (i === 0) continue;
    if (i % 8 === 0) out.push(svg`<text x=${x} y="10" text-anchor="middle">${Math.abs(i / 8)}</text>`);
    else out.push(svg`<path d=${i % 4 === 0 ? `M${x} 2v8` : `M${x} 4.500v3`}/>`);
  }
  return out;
};
const vRuler = () => {
  const out: TemplateResult[] = [];
  for (let i = -8; i <= 93; i++) {
    const y = 99 + i * 10.580;
    if (i % 8 === 0) { if (i) out.push(svg`<text transform="translate(10 ${y}) rotate(-90)" text-anchor="middle">${Math.abs(i / 8)}</text>`); }
    else out.push(svg`<path d=${i % 4 === 0 ? `M3 ${y}h7` : `M5 ${y}h3`}/>`);
  }
  return out;
};

const pane = (d: string) => html`<svg class="ic thin" width="32" height="32" viewBox="0 0 32 32"><rect x="1" y="1" width="30" height="30" rx="2"/><path d=${d}/></svg>`;
const tool = (icon: unknown, label: string, w: number) => html`<div class="tool">${icon}${fit(label, w)}</div>`;

@customElement("app-root")
class AppRoot extends LitElement {
  static styles = css`
    :host{display:block;width:3330px;height:2118px;background:#fff;overflow:hidden;font-family:Inter,"Open Sans",sans-serif;color:#475063}
    *{box-sizing:border-box}
    .stage{position:relative;width:3330px;height:2118px;padding:368px 426px 0 422px}
    .window{width:2482px;height:1396px;background:#fff;box-shadow:0 0 110px rgba(0,0,0,.15),0 0 0 1px #f3f3f3;display:flex;flex-direction:column}
    .art{position:absolute;fill:none;stroke-linecap:round;stroke-linejoin:round}
    .a1{left:1560px;top:120px}.a2{left:160px;top:980px}.a3{left:2980px;top:960px}.a4{left:1590px;top:1940px}
    .ic{display:block;flex:none;fill:none;stroke:currentColor;stroke-width:1.700;overflow:visible}
    .ic .f{fill:currentColor;stroke:none}.thin{stroke-width:1.300}
    .cell{flex:none;display:flex;align-items:center;justify-content:center;height:100%}
    .start{justify-content:flex-start}
    .head{height:78px;display:flex;align-items:flex-start}
    .head .cell{height:78px}
    .time{display:flex;flex-direction:column;gap:0;align-items:flex-start;justify-content:center;padding-bottom:1px}
    .time .big{font-size:19.500px;line-height:20px;font-weight:500}.time .small{font-size:14px;line-height:16px;color:#9c9c9c}
    .tool{display:flex;flex-direction:column;align-items:center;font-size:10.500px;font-weight:600;gap:5px;line-height:12px;padding-top:1px}
    .avatar{width:31px;height:31px;border-radius:50%;background:#049fe6;color:#fff;font-size:17px;font-weight:500;display:flex;align-items:center;justify-content:center;margin:0 0 1px}
    .panes{display:flex;padding-left:14px;height:1241px;gap:18.500px}
    .left{width:1218px;background:#f3f6fb;border:1px solid #eceff3;display:flex;flex-direction:column}
    .tabs{height:42px;display:flex;padding-top:6px}
    .tabs .tab{background:#e0e4e6;border-radius:4px 4px 0 0;font-size:13.500px;color:#666b70;height:36px;font-weight:500;padding-right:3px}
    .tabs .on{background:#26324d;color:#fff}.tabs .go{background:#2fcea0;color:#fff;gap:5px;padding:0}
    .tabs .win{height:26px;color:#111}
    .bar{height:37px;display:flex;color:#000;font-size:13.500px}
    .bar .sep{border-left:1px solid #e6e9f0}.bar .txt{color:#475063;font-weight:500}.bar .num{background:#fff;border:1px solid #e8ebf1;border-radius:3px;color:#475063;font-weight:500}
    .work{display:flex;height:1110px}
    .side{width:36px;display:flex;flex-direction:column;align-items:center;color:#000}
    .slot{width:36px;height:36.800px;display:flex;align-items:center;justify-content:center;flex:none;position:relative}
    .slot.on{background:#dbe1ef;padding-bottom:4px}
    .slot.mark::after{content:"";position:absolute;right:0;bottom:-3px;border:3px solid;border-color:transparent #000 #000 transparent}
    .glyph{font:bold 23px/1 "Liberation Serif",serif;padding-right:3px}
    .sw{width:23px;height:22.500px;border:1px solid #b9bcc4;border-radius:2px;background:#fff;margin:9px 9px 10px 4px;flex:none}
    .sw.k{background:#000}.sw.flat{margin:0}
    .canvas{display:flex;flex-direction:column}
    .map{display:block}.lb{font-family:"Noto Sans","Open Sans",sans-serif}.ttl{font-family:"Noto Sans","Open Sans",sans-serif;font-weight:700}
    .hs{height:8.500px;margin-left:25px;background:#f3f6fb;border:1px solid #dfe2e6;border-radius:5px 0 0 5px;padding-left:121px}
    .hs i{display:block;width:256px;height:8.500px;background:#ffa014;border-radius:4px;margin-top:-1px}
    .under{background:#fff;width:1173px}
    .vs{width:8px;background:#f3f6fb;border:1px solid #e0e3e8;border-radius:4px;padding-top:176px;height:1102px}
    .vs i{display:block;width:8px;height:189px;background:#ffa014;border-radius:4px;margin-left:-1px}
    .foot{height:49px;display:flex;font-size:14px;font-weight:500}
    .track{width:127px;height:13px;border-radius:7px;background:#eee;border:1px solid #e0e0e0;display:block}
    .track i{display:block;width:11px;height:11px;border-radius:50%;background:#ffa014;border:1px solid #c9a35d}
    .sel{background:#fff;border:1px solid #e4e7ec;border-radius:3px;width:100%;height:37px;display:flex;align-items:center;justify-content:space-between;padding:0 11px 0 14px;font-weight:400;color:#444}
    .right{width:1218px;background:#fff;border:1px solid #e6e9ee;display:flex;flex-direction:column}
    .crumb{height:37px;background:#f3f6fb;display:flex;font-size:14.500px}
    .crumb .cell{color:#333c4e}
    .dh{height:57px;display:flex;border-bottom:1.500px solid #dadce0;color:#202124;font-family:Roboto,sans-serif}
    .stack{display:flex;flex-direction:column;align-items:flex-start;width:100%}
    .line{display:flex;height:23px;padding-top:1px}
    .title{font-size:17px;font-weight:500}
    .docx{background:#4788f3;color:#fff;border-radius:3px;font-size:14px;font-weight:500}
    .line .docx{height:20px}
    .menu{font-size:14px;height:22px;color:#202124}.menu .cell{-webkit-text-stroke:.2px}
    .edit{color:#777b80;text-decoration:underline}
    .shr{background:#f7f7f8;color:#b6b9bd;border-radius:3px;font-size:14px;gap:7px;align-self:center}
    .dh .shr{height:31px}
    .cav{width:27.500px;height:27.500px;border-radius:50%;background:#2bab61;color:#fff;display:flex;align-items:center;justify-content:center;font-size:15px;font-weight:500}
    .tb{height:34px;display:flex;color:#54585d;font-size:13px;border-bottom:1px solid #d7dade;font-family:Roboto,sans-serif}
    .tb .sep{border-left:1px solid #dadce0;height:17px;align-self:center}
    .tb .hl{background:#e6effe;color:#3f7ff2;height:24px;align-self:center}
    .tb .stp{border:1px solid #dadce0;border-radius:3px;height:21px;align-self:center}
    .tb .stp>*{flex:1;text-align:center;height:19px;line-height:19px}.tb .stp b{font-size:17px}
    .tb .stp span{border:1px solid #dadce0;border-width:0 1px;flex:0 0 36px}
    .tb .ch{font-size:18px;font-weight:700}.tb .au{border-bottom:3.500px solid #000;height:20px;line-height:16px;width:18px;text-align:center}
    .faint{opacity:.45}
    .rul{display:block;flex:none;background:linear-gradient(90deg,#e8ebf0 0 231px,#fff 231px 861px,#e9eaee 861px);border-bottom:1px solid #dadce0}
    .rul text,.vr text{font:10.500px Roboto,sans-serif;fill:#5a5e63;stroke:none}.rul path,.vr path{stroke:#b6b9bd;stroke-width:1;fill:none}
    .body{display:flex;height:1098px;background:#f7f8f9;position:relative}
    .vr{display:block;flex:none;background:linear-gradient(#e4e8ee 0 99px,#fff 99px);border-right:1px solid #dadce0}
    .outl{width:169px;padding:28px 0 0 16px;color:#9a9da1;flex:none}
    .page{width:841px;height:1074px;margin-top:16px;background:#fff;box-shadow:0 0 4px rgba(0,0,0,.18);padding:65.500px 0 0 68.500px;font-family:"Noto Sans","Open Sans",sans-serif;color:#000;font-size:21.500px;letter-spacing:-.600px;flex:none}
    .r{display:grid;grid-template-columns:149.500px 149.500px 150px 1fr;height:27.480px;line-height:27.480px;white-space:nowrap}
    .thumb{width:8px;height:40px;background:#d4d6da;border-radius:4px;margin:4px 0 0 181px}
    .chat{position:absolute;left:826px;top:25px;width:385px;height:1074px;background:#f3f6fb;border-radius:4px;box-shadow:0 0 90px rgba(0,0,0,.075),0 0 2px rgba(0,0,0,.15);display:flex;flex-direction:column;align-items:flex-start}
    .ch-h{width:100%;height:83px;background:#fff;border-radius:4px 4px 0 0;display:flex;align-items:center;justify-content:space-between;padding:0 24px 0 28px;font-size:20px;font-weight:500}
    .m{border-radius:12px;display:flex;flex-direction:column;align-items:flex-start;font-size:14.500px;font-weight:500}
    .m1{margin:20px 0 0 48px;width:306px;height:125px;background:#e5e5e5;padding:22px 26px 0 23px}
    .m1 fit-text{line-height:21.600px}
    .m2{margin:30px 0 0 14px;width:306px;height:108px;background:#e5ebf7;padding:21px 27px 0 21px}
    .m2 .nm{font-weight:600;margin-left:2px;line-height:24px}.m2 .tx{line-height:27px}
    .mf{width:100%;display:flex;justify-content:space-between;align-items:flex-end;height:25px;font-size:11px;font-weight:400;color:#8f949c}
    .m1 .mf fit-text{line-height:14px}.mf svg{color:#3d55f2;margin-bottom:3px}.m2 .mf{height:27px;justify-content:flex-end}
    .inp{margin:auto 0 24px 24px;width:336px;height:60px;background:#fff;border:1px solid #e8eaee;border-radius:5px;display:flex;align-items:center;justify-content:space-between;padding:0 11px 0 22px;font-size:14.500px;color:#8c8c8c}
    .send{width:85px;height:37px;background:#0d99f5;color:#fff;border-radius:3px;display:flex;align-items:center;justify-content:center;font-weight:700}
    .tip{position:absolute;left:342px;bottom:-9px;border:9.500px solid transparent;border-top-color:#f0f3f9;border-bottom:0}
    .dock{display:flex;height:56px;margin:13px 0 0 14px;align-items:center}
    .btn{width:55px;height:56px;border-radius:4px;color:#fff;display:flex;flex-direction:column;align-items:center;justify-content:flex-end;gap:7px;padding-bottom:9px;margin-right:9.200px;font-size:9.500px;line-height:12px;font-weight:700;flex:none}
    .g{background:#2fab63}.rd{background:#ea5959}.n{background:#475063}
    .sq{width:53px;height:53px;border:1px solid #ececec;border-radius:4px;display:flex;align-items:center;justify-content:center;color:#111;position:relative;background:#fff;margin-right:13.500px;flex:none}
    .sq.first{margin-left:1874px}
    .badge{position:absolute;right:-8px;top:-7.500px;width:27px;height:27px;border-radius:50%;background:#ea5656;border:2px solid #e12424;color:#fff;font-size:13px;font-weight:600;display:flex;align-items:center;justify-content:center}
    .banner{position:absolute;left:986px;top:1592px;width:1358px;height:267px;border-radius:40px;background:rgba(255,167,74,.9);color:#fff;display:flex;flex-direction:column;align-items:center;justify-content:center;font-size:91px;line-height:95px;font-weight:600;padding-bottom:6px}
  `;
  render() {
    const dots: [number, string][] = [[0, "#e02a26"], [45, "#f7962d"], [90, "#fcb745"], [135, "#c12ee0"], [180, "#4b8be8"], [225, "#53d8b6"], [270, "#b3c68c"], [315, "#87d32a"]];
    return html`<div class="stage">
      <div class="window">
        <div class="head">${run(422, [
          [441, 36, html`<svg width="36" height="40" viewBox="-18 -20 36 40">${dots.map(([a, c]) => svg`<circle fill=${c} r="3.300" cx=${13.800 * Math.sin(a * Math.PI / 180)} cy=${-13.400 * Math.cos(a * Math.PI / 180)}/>`)}</svg>`],
          [507, 30, html`<svg class="ic" width="30" height="34" viewBox="0 0 30 34"><g stroke-width="2"><circle cx="15.400" cy="20" r="12.300"/><path d="M15.400 14v10M12 2.500h7M15.400 3v4M24 7l2.500 3"/></g></svg>`],
          [549, 90, html`<div class="time">${fit("00:22:44", 83, "big")}${fit("Time remaining", 87, "small")}</div>`, "start"],
          [1556, 41, tool(pane(""), "Full Pane", 41)], [1610, 45, tool(pane("M16 1v30"), "Half Pane", 44)],
          [1668, 40, tool(pane("M16 1v30M16 16h15"), "Tri Pane", 37)], [1718, 51, tool(pane("M16 1v30M1 16h30"), "Quad Pane", 50)],
          [2588, 57, tool(html`<svg class="ic thin" width="32" height="32" viewBox="0 0 32 32"><circle cx="16" cy="5" r="4"/><path d="M11 13h7v14h4v4H10v-4h4V17h-3z"/></svg>`, "Ask for Help", 56)],
          [2658, 57, tool(html`<svg class="ic thin" width="32" height="32" viewBox="0 0 32 32"><circle cx="16" cy="27" r="4"/><path d="M12 1h8l-1.500 18h-5z"/></svg>`, "Report User", 56)],
          [2728, 50, tool(html`<svg class="ic thin" width="32" height="32" viewBox="0 0 32 32"><rect x="1" y="1" width="30" height="30" rx="2"/><path d="M16 1v30M1 16h30M5 9h7M20 9h7M23.500 5.500v7M5.500 20.500l6 6M11.500 20.500l-6 6M20 22h7M20 25.500h7"/></svg>`, "Calculator", 49)],
          [2791, 56, tool(html`<svg class="ic thin" width="32" height="32" viewBox="0 0 32 32"><rect x="1" y="6" width="30" height="25" rx="2"/><path d="M10 6V1.500h12V6"/><circle cx="16" cy="19" r="5.500"/></svg>`, "Screenshot", 55)],
          [2857, 33, tool(html`<div class="avatar">K</div>`, "User", 23)],
        ])}</div>
        <div class="panes">
          <div class="left">
            <div class="tabs">${run(437, [
              [437, 51, fit("All", 14), "tab"], [489, 154, fit("Alison Tucker", 80), "tab"], [644, 153.500, fit("Erica Mora", 63), "tab on"], [798.500, 154, fit("Wayne Sutherland", 111), "tab"],
              [1119, 69, html`${ic(I.plusBox, 14)}${fit("New", 27)}`, "tab go"], [1190.500, 79, html`${ic(I.folder, 15)}${fit("Open", 33)}`, "tab go"], [1271.500, 115, html`${ic(I.collab, 15)}${fit("Collaborate", 71)}`, "tab go"],
              [1584, 21, ic(I.full, 14), "win"], [1607, 21, ic(I.x, 14), "win"],
            ])}</div>
            <div class="bar">${run(437, [
              [444, 21, ic(I.importIn, 15)], [481, 21, ic(I.save, 15)], [518, 21, ic(I.trash, 15)], [555, 21, ic(I.image, 15)], [592, 21, ic(I.google, 14)], [629, 21, ic(I.exportOut, 16)], [666, 21, ic(I.copy, 15)], [703, 21, ic(I.undo, 16)], [740, 21, ic(I.redo, 16)],
              [769, 4, "", "sep"], [782, 24, fit("Size", 24), "txt"], [824.500, 43, fit("2000", 30), "num"], [884, 12, "x", "txt"], [906.500, 43, fit("2000", 30), "num"], [964, 22, ic(I.crop, 15)], [994, 4, "", "sep"], [1003, 21, ic(I.share, 15)], [1039, 22, ic(I.lock, 16)], [1071, 21, ic(I.x, 13)],
            ])}</div>
            <div class="work">
              <div class="side">
                <div class="slot on">${ic(I.pencil, 15)}</div><div class="slot">${ic(I.eraser, 15)}</div><div class="slot mark">${ic(I.square, 16)}</div>
                <div class="slot glyph">T</div><div class="slot">${ic(I.frame, 16)}</div><div class="slot glyph">π</div>
                <div class="sw"></div><div class="sw k"></div><div class="slot mark">${ic(I.search, 15)}</div>
              </div>
              <div class="canvas">${worldMap}<div class="under"><div class="hs"><i></i></div></div></div>
              <div class="vs"><i></i></div>
            </div>
            <div class="foot">${run(437, [
              [448, 62, fit("Pencil Size", 61)], [529, 127, html`<span class="track"><i></i></span>`], [668, 12, "3"], [706, 28, fit("Font", 26)],
              [751, 106, html`<div class="sel">${fit("Arial", 25)}${ic(I.chevron, 10)}</div>`], [865, 77, html`<div class="sel">${fit("20", 14)}${ic(I.chevron, 10)}</div>`],
              [949, 23, html`<div class="sw k flat"></div>`],
            ])}</div>
          </div>
          <div class="right">
            <div class="crumb">${run(1673.500, [[1683, 14, ic(I.back, 13)], [1702.500, 74, fit("Back to folder", 73)], [2836, 21, ic(I.full, 13)], [2859, 21, ic(I.x, 13)]])}</div>
            <div class="dh">${run(1673.500, [
              [1693.500, 25, html`<svg width="25" height="33" viewBox="0 0 25 33"><path fill="#4788f3" d="M2 0h15l8 8.500V31a2 2 0 0 1-2 2H2a2 2 0 0 1-2-2V2a2 2 0 0 1 2-2z"/><path fill="#a6c5fa" d="M17 0l8 8.500h-8z"/><path stroke="#fff" stroke-width="1.800" d="M6 16h13M6 19h13M6 22h13M6 25h9"/></svg>`],
              [1736, 460, html`<div class="stack"><div class="line">${run(1736, [[1737, 190, fit("Basic Geography Lesson 1", 188), "title"], [1938, 49, fit(".DOCX", 39), "docx"], [1998, 21, ic(I.star, 14)], [2030, 21, ic(I.cloud, 15)]])}</div>
                <div class="line menu">${run(1736, [[1736, 20, fit("File", 19)], [1767.500, 22, fit("Edit", 22)], [1801.500, 28, fit("View", 27)], [1841, 33, fit("Insert", 33)], [1889.500, 41, fit("Format", 41)], [1942.500, 30, fit("Tools", 29)], [1987, 26, fit("Help", 26)], [2032, 147, fit("Last edit was seconds ago", 146, "edit")]])}</div></div>`],
              [2718, 19, ic(I.comment, 18)], [2755, 77, html`<svg width="12" height="13" viewBox="0 0 12 13" fill="#fff"><circle cx="6" cy="3.500" r="3"/><path d="M0 13c0-7 12-7 12 0z"/></svg>${fit("Share", 34)}`, "shr"], [2849.500, 28, html`<div class="cav">C</div>`],
            ])}</div>
            <div class="tb">${run(1673.500, [
              [1696, 18, ic(I.uArrow, 15)], [1721, 18, ic(I.rArrow, 15)], [1745, 18, ic(I.print, 16)], [1770, 18, ic(I.spell, 15)], [1795, 18, ic(I.paint, 15)], [1820, 2, "", "sep"],
              [1833.500, 26, fit("100%", 26)], [1869, 10, ic(I.caret, 8)], [1885.500, 2, "", "sep"], [1900, 58, fit("Normal text", 58)], [1968, 10, ic(I.caret, 8)], [1984.500, 2, "", "sep"], [2000, 22, fit("Arial", 22)], [2068, 10, ic(I.caret, 8)],
              [2086.500, 77, html`<b>−</b><span>14</span><b>+</b>`, "stp"], [2170, 18, "B", "ch"], [2196, 18, html`<i>I</i>`, "ch"], [2221, 18, html`<u>U</u>`, "ch"], [2246, 18, html`<div class="au">A</div>`, "ch"], [2273, 18, ic(I.marker, 15)], [2298.500, 2, "", "sep"],
              [2305, 19, ic(I.link, 17)], [2331, 18, html`<span class="faint">${ic(I.addComment, 14)}</span>`], [2355, 18, ic(I.img2, 15)], [2373, 10, ic(I.caret, 8)], [2390.500, 2, "", "sep"],
              [2395, 24, ic(I.alignL, 15), "hl"], [2422, 18, ic(I.alignC, 15)], [2447, 18, ic(I.alignR, 15)], [2472, 18, ic(I.alignJ, 15)], [2497.500, 2, "", "sep"], [2506, 18, ic(I.spacing, 17)], [2531.500, 2, "", "sep"],
              [2539, 18, ic(I.numbers, 15)], [2563, 10, ic(I.caret, 8)], [2581, 18, ic(I.bullets, 15)], [2603, 10, ic(I.caret, 8)], [2619, 18, ic(I.outdent, 15)], [2644, 18, ic(I.indent, 15)], [2669, 2, "", "sep"],
              [2676, 18, ic(I.clear, 15)], [2705, 18, ic(I.pen, 15)], [2722, 10, ic(I.caret, 8)], [2739, 2, "", "sep"], [2747, 17, ic(I.up, 12)],
            ])}</div>
            <svg class="rul" width="1216" height="13" viewBox="0 0 1216 12">${hRuler()}<path style="fill:#4285f4;stroke:none" d="M225.500 1.500h11.500v5l-5.700 5-5.800-5z"/><path style="fill:#2a9bf2;stroke:none" d="M855.500 6h11l-5.500 5.500z"/></svg>
            <div class="body">
              <svg class="vr" width="13" height="1098" viewBox="0 0 12 1098">${vRuler()}</svg>
              <div class="outl">${ic(I.outline, 17)}</div>
              <div class="page">${rows.map((r, i) => html`<div class="r"><span>${i + 1}</span><span>${r[0]}</span><span>${r[1]}</span><span>${r[2]}</span></div>`)}</div>
              <div class="thumb"></div>
              <div class="chat">
                <div class="ch-h">${ic(I.back, 16)}${fit("Tutor", 48)}</div>
                <div class="m m1">${fit("Hi Jackie, please let me know if you have", 257)}${fit("anything you are stuck with during this", 250)}${fit("session. :)", 66)}
                  <div class="mf">${ic(I.checks, 15)}${fit("05/05/2021 13:43", 84)}</div></div>
                <div class="m m2">${fit("Jackie Lane", 83, "nm")}${fit("Hi Julie, thank you so much.", 177, "tx")}<div class="mf">${fit("05/05/2021 15:45", 83)}</div></div>
                <div class="inp">${fit("Hello Julie...", 82)}<div class="send">${fit("Send", 36)}</div></div>
                <div class="tip"></div>
              </div>
            </div>
          </div>
        </div>
        <div class="dock">
          <div class="btn g">${ic(I.cam, 23)}${fit("Cam", 22)}</div><div class="btn g">${ic(I.mic, 21)}${fit("Mic", 17)}</div><div class="btn rd">${ic(I.shareOff, 21)}${fit("Share", 27)}</div>
          <div class="btn rd">${ic(I.annOff, 21)}${fit("Announce", 47)}</div><div class="btn n">${ic(I.gear, 21)}${fit("Settings", 40)}</div><div class="btn n">${ic(I.show, 21)}${fit("Show", 26)}</div><div class="btn n">${ic(I.max, 21)}${fit("Maximize", 45)}</div>
          <div class="sq first">${ic(I.help, 20)}</div><div class="sq">${ic(I.chat, 19)}<span class="badge">1</span></div>
        </div>
      </div>
      <svg class="art a1" width="220" height="200" viewBox="0 0 660 600" stroke="#54bfc4" stroke-width="15"><path d="M225 82L322 98Q346 104 344 128L332 192Q326 216 302 214L250 209 201 241 211 203Q184 198 186 172L196 108Q202 80 225 82Z M398 110L496 127Q520 132 518 158L508 220Q502 246 472 246L471 286 432 239 382 231Q358 226 360 200L370 134Q376 108 398 110Z M226 142L305 156M400 172L478 186"/><circle cx="202" cy="313" r="40"/><circle cx="330" cy="335" r="40"/><circle cx="457" cy="357" r="40"/><path d="M111 466C114 410 140 377 182 378C225 382 248 415 245 440Q240 465 239 488C242 430 265 398 310 400C352 404 376 440 373 462L367 508C368 452 395 420 438 421C480 426 502 460 499 490L493 531ZL493 531"/></svg>
      <svg class="art a2" width="200" height="190" viewBox="0 0 600 570" stroke="#ffa94d" stroke-width="15"><path d="M84 207L465 122Q493 118 501 146L554 390Q558 416 534 424L155 510Q128 514 120 486L64 240Q58 214 84 207ZM64 240L84 322Q92 344 118 339L492 254Q518 246 514 222M190 182L183 150Q184 126 205 121L315 96Q344 92 352 114L358 140M148 340L156 382Q160 396 176 394L204 388Q218 382 214 368L206 326M406 280L414 324Q418 338 434 336L462 329Q478 322 474 308L466 266"/></svg>
      <svg class="art a3" width="180" height="180" viewBox="0 0 180 180" stroke="#ffa94d" stroke-width="4.800"><g transform="translate(-2980 -962)"><path d="M2998 979L3140 1000L3138 1010L2996 988ZM3004 991L2992 1066L3120 1084L3131 1010M3064 1076L3060 1120M3060 1078L3028 1106M3064 1080L3086 1112"/><circle cx="3036" cy="1033" r="22"/><path d="M3038 1011L3036 1033L3058 1036M3078 1024L3110 1028M3076 1037L3098 1040M3074 1050L3106 1054"/></g></svg>
      <svg class="art a4" width="150" height="160" viewBox="0 0 150 160" stroke="#67bd85" stroke-width="6"><path d="M108 40A57 57 0 1 0 127 64M48 82L75 98 134 15"/></svg>
      <div class="banner">${fit("No downloads required,", 1064)}${fit("works on multiple browsers", 1230)}</div>
    </div>`;
  }
}
